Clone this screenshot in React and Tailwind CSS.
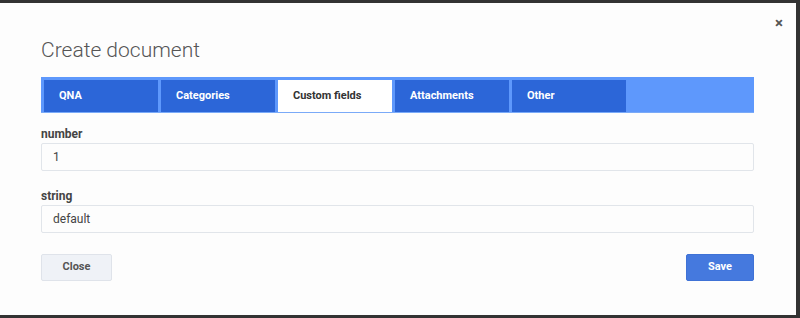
import React from "react";

const tabs = ["QNA", "Categories", "Custom fields", "Attachments", "Other"];

export default function App() {
  return (
    <div className="w-[800px] h-[318px] bg-[#333333] overflow-hidden" style={{ fontFamily: "Roboto, 'Liberation Sans', sans-serif" }}>
      <div className="relative mt-[3px] w-[796px] h-[312px] bg-[#fdfdfd] pt-[35px] px-[41px]">
        <button className="absolute right-[13px] top-[13px] text-[#555] text-[15px] font-bold leading-none">×</button>
        <h1 className="text-[21px] leading-[24px] font-light text-[#555]">Create document</h1>
        <div className="mt-[15px] flex h-[36px] w-[713px] bg-[#5e98fc] pt-[3px] pl-[3px] gap-[3px] border-b border-[#7aaaf8]">
          {tabs.map((t, i) => (
            <div
              key={t}
              className={
                "w-[114px] h-full flex items-center pl-[15px] text-[11px] font-bold " +
                (i === 2 ? "bg-white text-[#333]" : "bg-[#2c66d8] text-white")
              }
            >
              {t}
            </div>
          ))}
        </div>
        <div className="mt-[13px] text-[12px] leading-[16px] font-bold text-[#444]">number</div>
        <div className="mt-[1px] h-[28px] w-[713px] border border-[#e1e5ea] rounded-[2px] bg-[#fdfdfd] flex items-center pl-[11px] text-[12px] text-[#444]">1</div>
        <div className="mt-[17px] text-[12px] leading-[16px] font-bold text-[#444]">string</div>
        <div className="mt-[1px] h-[28px] w-[713px] border border-[#e1e5ea] rounded-[2px] bg-[#fdfdfd] flex items-center pl-[11px] text-[12px] text-[#444]">default</div>
        <div className="mt-[21px] flex justify-between w-[713px]">
          <button className="w-[71px] h-[27px] bg-[#eff2f7] border border-[#dfe3ea] rounded-[2px] text-[11px] font-bold text-[#555]">Close</button>
          <button className="w-[68px] h-[27px] bg-[#4579de] border border-[#3f72d6] rounded-[2px] text-[11px] font-bold text-white">Save</button>
        </div>
      </div>
    </div>
  );
}
